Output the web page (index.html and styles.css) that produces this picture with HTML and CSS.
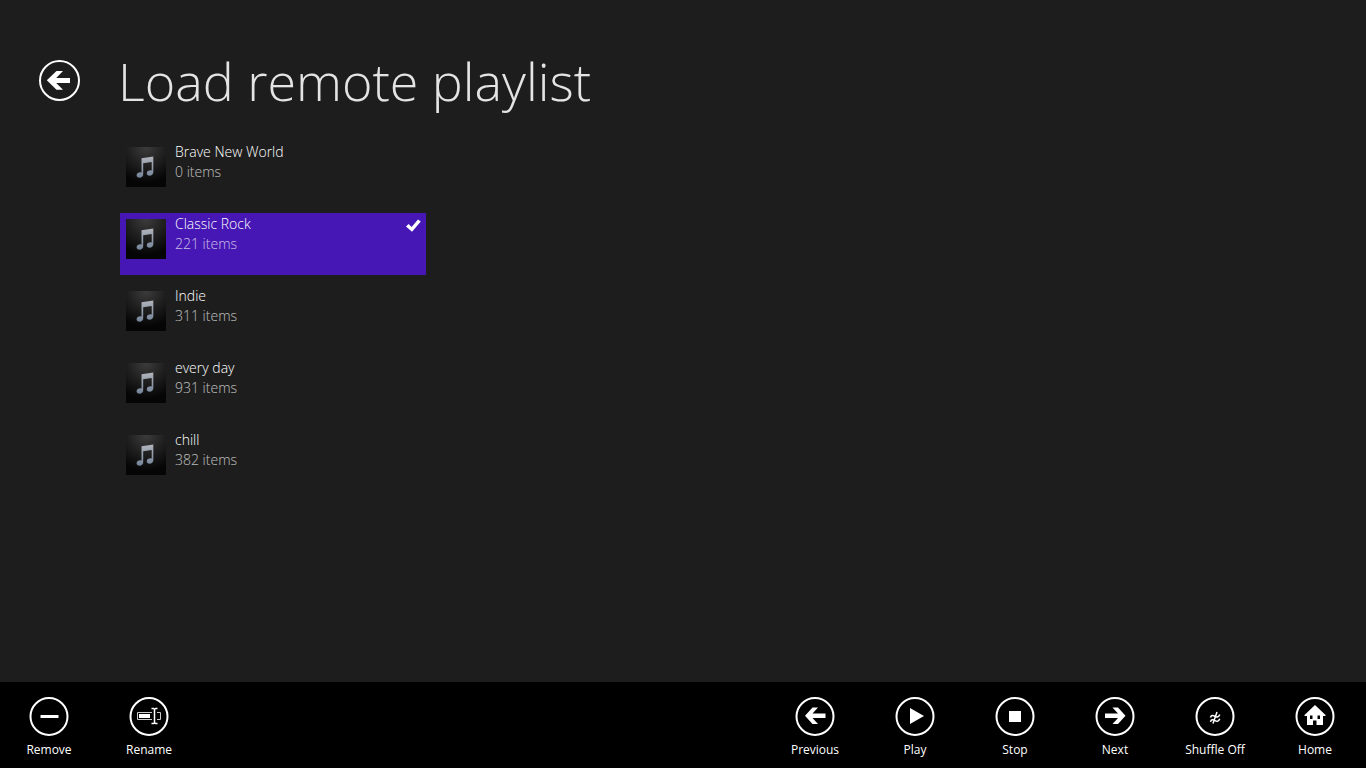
FILE: index.html
```html
<!DOCTYPE html>
<html lang="en">
<head>
<meta charset="utf-8">
<meta name="viewport" content="width=device-width, initial-scale=1">
<title>Load remote playlist</title>
<link rel="stylesheet" href="styles.css">
</head>
<body>
<svg class="defs" aria-hidden="true">
  <defs>
    <radialGradient id="thumb-bg" cx="50%" cy="0%" r="90%">
      <stop offset="0" stop-color="#3c3c3c"/>
      <stop offset="0.5" stop-color="#202020"/>
      <stop offset="1" stop-color="#050505"/>
    </radialGradient>
    <linearGradient id="note-fill" x1="0" y1="0" x2="0" y2="1">
      <stop offset="0" stop-color="#b0b3ba"/>
      <stop offset="1" stop-color="#74849a"/>
    </linearGradient>
    <symbol id="note" viewBox="0 0 40 40">
      <rect width="40" height="40" fill="url(#thumb-bg)"/>
      <path fill="url(#note-fill)" d="M15.500 11.200 27.300 9.600V25.500c0 1.900-1.800 3.200-3.700 3.200-1.600 0-2.900-1-2.900-2.400 0-1.800 1.900-3 3.800-3 .5 0 .9.1 1.200.2V15L17.200 16.300V27.500c0 1.900-1.800 3.200-3.700 3.200-1.600 0-2.900-1-2.900-2.400 0-1.800 1.800-3 3.700-3 .5 0 .9.1 1.200.2z"/>
    </symbol>
  </defs>
</svg>
<div class="page">
  <header class="header">
    <button class="back" type="button" aria-label="Back">
      <svg viewBox="0 0 41 41" width="41" height="41"><circle class="ring" cx="20.500" cy="20.500" r="19.500"/><path d="M7.800 20.300 17.500 11H24L17.200 18H31V23H17.200L24 29.700H17.500z"/></svg>
    </button>
    <h1 class="title">Load remote playlist</h1>
  </header>
  <main class="main">
    <ul class="playlists">
      <li><button class="playlist" type="button"><svg class="thumb" aria-hidden="true"><use href="#note"/></svg><span class="info"><span class="name">Brave New World</span><span class="count">0 items</span></span></button></li>
      <li><button class="playlist selected" type="button" aria-pressed="true"><svg class="thumb" aria-hidden="true"><use href="#note"/></svg><span class="info"><span class="name">Classic Rock</span><span class="count">221 items</span></span><svg class="check" viewBox="0 0 15 13" aria-hidden="true"><path d="M0 7.500 2.600 5 5.600 8 12 .5 14.800 2.500 6 12.800z"/></svg></button></li>
      <li><button class="playlist" type="button"><svg class="thumb" aria-hidden="true"><use href="#note"/></svg><span class="info"><span class="name">Indie</span><span class="count">311 items</span></span></button></li>
      <li><button class="playlist" type="button"><svg class="thumb" aria-hidden="true"><use href="#note"/></svg><span class="info"><span class="name">every day</span><span class="count">931 items</span></span></button></li>
      <li><button class="playlist" type="button"><svg class="thumb" aria-hidden="true"><use href="#note"/></svg><span class="info"><span class="name">chill</span><span class="count">382 items</span></span></button></li>
    </ul>
  </main>
  <footer class="appbar">
    <div class="group">
      <button class="command" type="button"><svg class="icon" viewBox="0 0 40 40"><circle class="ring" cx="20" cy="19.500" r="18.500"/><path d="M11.500 18H29.500V21H11.500z"/></svg><span>Remove</span></button>
      <button class="command" type="button"><svg class="icon" viewBox="0 0 40 40"><circle class="ring" cx="20" cy="19.500" r="18.500"/><path class="thin" d="M23 15.500H8.500V22.500H23M28 15.500H31.500V22.500H28"/><path d="M10 17H21V21H10z"/><path class="caret" d="M22.500 11.500H24.500L25.500 12.500 26.500 11.500H28.500M25.500 12.500V25.500M22.500 26.500H24.500L25.500 25.500 26.500 26.500H28.500"/></svg><span>Rename</span></button>
    </div>
    <div class="group">
      <button class="command" type="button"><svg class="icon" viewBox="0 0 40 40"><circle class="ring" cx="20" cy="19.500" r="18.500"/><path d="M10 18.700 17.500 10.500H23L17.500 16.500H30.500V21H17.500L23 27H17.500z"/></svg><span>Previous</span></button>
      <button class="command" type="button"><svg class="icon" viewBox="0 0 40 40"><circle class="ring" cx="20" cy="19.500" r="18.500"/><path d="M15 11 29 19 15 27z"/></svg><span>Play</span></button>
      <button class="command" type="button"><svg class="icon" viewBox="0 0 40 40"><circle class="ring" cx="20" cy="19.500" r="18.500"/><path d="M14 14H26V25H14z"/></svg><span>Stop</span></button>
      <button class="command" type="button"><svg class="icon" viewBox="0 0 40 40"><circle class="ring" cx="20" cy="19.500" r="18.500"/><path d="M30.500 18.700 23 10.500H17.500L23 16.500H10V21H23L17.500 27H23z"/></svg><span>Next</span></button>
      <button class="command" type="button"><svg class="icon" viewBox="0 0 40 40"><circle class="ring" cx="20" cy="19.500" r="18.500"/><path class="wave" d="M15.500 20.500C16 18 18 18 20 19.300S24 20 24.700 17.500M15.500 24.800C16 22.300 18 22.300 20 23.600S24 24.300 24.700 21.800M22 15 18 26.500"/></svg><span>Shuffle Off</span></button>
      <button class="command" type="button"><svg class="icon" viewBox="0 0 40 40"><circle class="ring" cx="20" cy="19.500" r="18.500"/><path fill-rule="evenodd" d="M20 8 30.500 18V19H28V28H21.500V23.500H18V28H12V19H9.500V18zM15 18.500V22H17.500V18.500zM22.500 18.500V22H25V18.500z"/></svg><span>Home</span></button>
    </div>
  </footer>
</div>
</body>
</html>
```
FILE: styles.css
```css
* {
  box-sizing: border-box;
}

body {
  margin: 0;
  background: #1d1d1d;
  color: #fff;
  font-family: "Open Sans", "Noto Sans", sans-serif;
}

button {
  margin: 0;
  padding: 0;
  border: 0;
  background: none;
  color: inherit;
  font: inherit;
  cursor: pointer;
}

svg {
  display: block;
  fill: #fff;
}

.defs {
  position: absolute;
  width: 0;
  height: 0;
}

.ring {
  fill: none;
  stroke: #fff;
  stroke-width: 2;
}

.thin {
  fill: none;
  stroke: #ccc;
  stroke-width: 1;
}

.caret {
  fill: none;
  stroke: #fff;
  stroke-width: 1.5;
}

.wave {
  fill: none;
  stroke: #fff;
  stroke-width: 1.5;
}

.page {
  display: flex;
  flex-direction: column;
  min-height: 100vh;
}

.header {
  display: flex;
  align-items: center;
  gap: 38px;
  padding: 40px 39px 20px;
}

.title {
  margin: 0;
  color: #e4e4e4;
  font-size: 52px;
  font-weight: 300;
  line-height: 81px;
}

.main {
  flex: 1;
  padding-left: 120px;
}

.playlists {
  display: grid;
  gap: 10px;
  max-width: 306px;
  margin: 0;
  padding: 0;
  list-style: none;
}

.playlist {
  display: flex;
  gap: 9px;
  width: 100%;
  min-height: 62px;
  padding: 0 5px 0 6px;
  text-align: left;
}

.selected {
  background: #4617b4;
}

.thumb {
  width: 40px;
  height: 40px;
  margin-top: 6px;
}

.info {
  display: flex;
  flex: 1;
  flex-direction: column;
  padding-top: 1px;
  font-size: 14px;
  font-weight: 300;
  line-height: 20px;
}

.count {
  opacity: 0.7;
}

.check {
  width: 15px;
  height: 13px;
  margin-top: 6px;
}

.appbar {
  display: flex;
  justify-content: space-between;
  padding: 15px 2px 9px 0;
  background: #000;
}

.group {
  display: flex;
  gap: 2px;
}

.command {
  display: flex;
  flex-direction: column;
  align-items: center;
  gap: 4px;
  width: 98px;
  font-size: 12px;
  line-height: 18px;
}

.icon {
  width: 40px;
  height: 40px;
}
```
